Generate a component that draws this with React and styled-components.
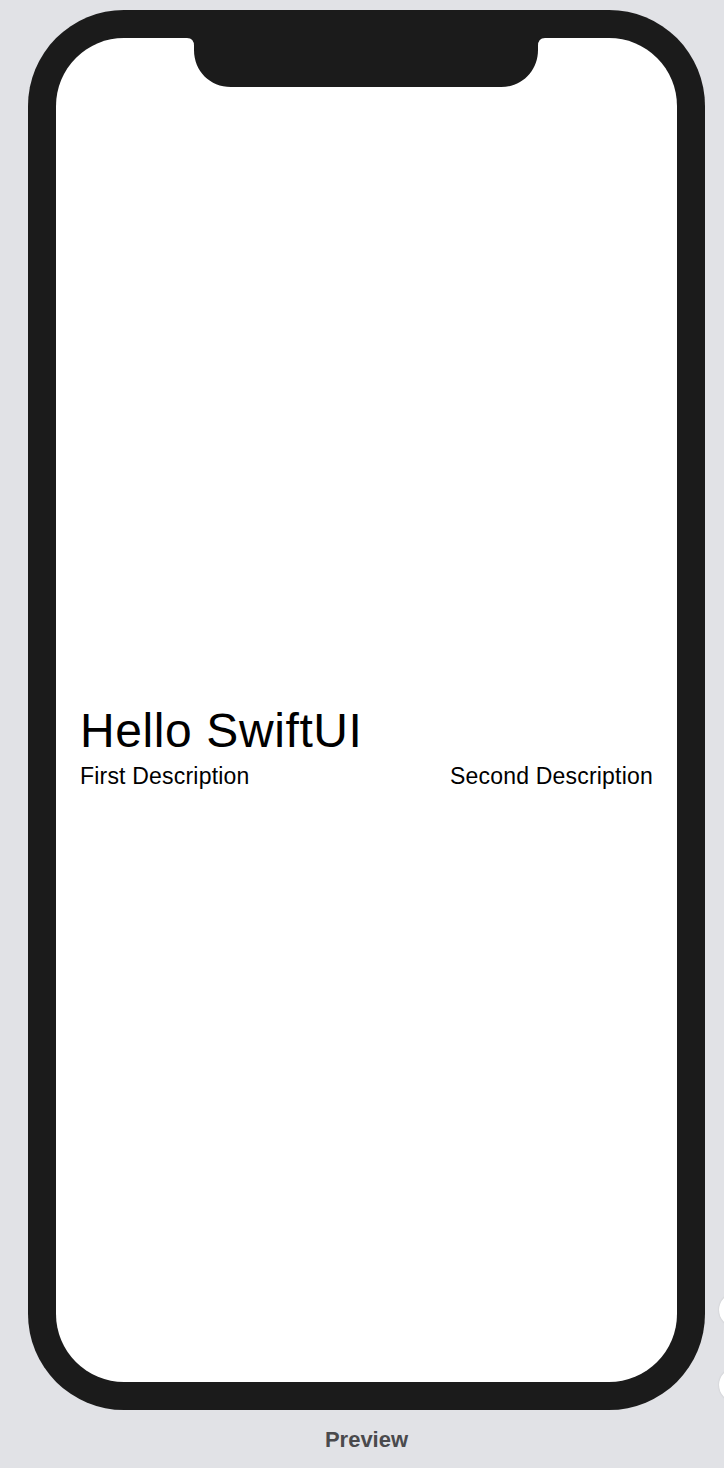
import styled, { createGlobalStyle } from "styled-components";

const GlobalStyle = createGlobalStyle`
  html, body {
    margin: 0;
    padding: 0;
    background: #e1e2e6;
    font-family: "Liberation Sans", Arial, sans-serif;
  }
  body {
    overflow: hidden;
  }
`;

export default function App() {
  return (
    <>
      <GlobalStyle />
      <Canvas>
        <Column>
          <Frame>
            <Screen>
              <Notch viewBox="0 0 358 49" width="358" height="49">
                <path
                  d="M0 0 H358 Q351 0 351 8 V12 C351 33 335 49 314 49 H44 C23 49 7 33 7 12 V8 Q7 0 0 0 Z"
                  fill="#1b1b1b"
                />
              </Notch>
              <Content>
                <Title>Hello SwiftUI</Title>
                <DescRow>
                  <Desc>First Description</Desc>
                  <Desc>Second Description</Desc>
                </DescRow>
              </Content>
            </Screen>
          </Frame>
          <Label>Preview</Label>
        </Column>
        <SideButton $top={1293} />
        <SideButton $top={1368} />
      </Canvas>
    </>
  );
}

const Canvas = styled.div`
  position: relative;
  width: 724px;
  height: 1468px;
  overflow: hidden;
`;

const Column = styled.div`
  display: flex;
  flex-direction: column;
  width: 677px;
  margin-left: 28px;
  padding-top: 10px;
`;

// black phone body
const Frame = styled.div`
  box-sizing: border-box;
  width: 677px;
  height: 1400px;
  padding: 28px;
  background: #1b1b1b;
  border-radius: 96px;
`;

const Screen = styled.div`
  position: relative;
  box-sizing: border-box;
  height: 100%;
  background: #ffffff;
  border-radius: 68px;
  overflow: hidden;
  display: flex;
  flex-direction: column;
  justify-content: center;
  padding: 72px 24px 0 24px;
`;

const Notch = styled.svg`
  position: absolute;
  top: 0;
  left: 131px;
  display: block;
`;

const Content = styled.div`
  display: flex;
  flex-direction: column;
`;

const Title = styled.div`
  font-size: 48px;
  line-height: 56px;
  color: #000;
  letter-spacing: 0.6px;
`;

const DescRow = styled.div`
  display: flex;
  justify-content: space-between;
  margin-top: 3px;
`;

const Desc = styled.div`
  font-size: 23px;
  line-height: 28px;
  color: #000;
  letter-spacing: 0.2px;
`;

const Label = styled.div`
  margin-top: 18px;
  text-align: center;
  font-size: 22px;
  line-height: 24px;
  font-weight: 700;
  color: #4a4a4d;
`;

const SideButton = styled.div`
  position: absolute;
  left: 719px;
  top: ${(p) => p.$top}px;
  width: 34px;
  height: 34px;
  border-radius: 50%;
  background: #ffffff;
  box-shadow: 0 0 2px rgba(0, 0, 0, 0.15);
`;
